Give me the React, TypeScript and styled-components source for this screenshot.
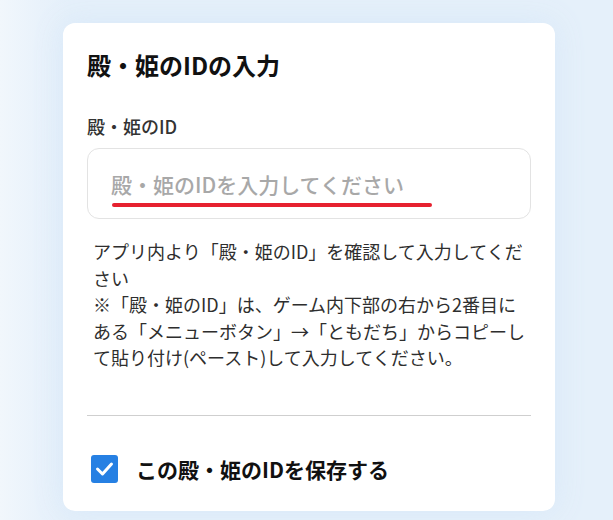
import React from "react";
import styled, { createGlobalStyle } from "styled-components";

const Global = createGlobalStyle`
  html, body { margin: 0; padding: 0; }
  body {
    background: #e6f0fa;
    font-family: "Noto Sans CJK JP", "Noto Sans", sans-serif;
    color: #222;
  }
`;

const Page = styled.div`
  min-height: 520px;
  padding: 23px 0 0 63px;
  box-sizing: border-box;
  background: linear-gradient(90deg, #f1f7fc 0px, #e9f2fb 40px, #e5f0fa 70px);
`;

const Card = styled.div`
  width: 492px;
  height: 488px;
  box-sizing: border-box;
  background: #fff;
  border-radius: 12px;
  padding: 26px 24px 0 24px;
  box-shadow: 0 0 30px rgba(214, 231, 248, 0.9);
`;

const Title = styled.h1`
  margin: 0;
  font-size: 24px;
  font-weight: 700;
  line-height: 32px;
  color: #111;
`;

const Label = styled.label`
  display: block;
  margin-top: 32px;
  font-size: 18px;
  font-weight: 500;
  line-height: 26px;
  color: #333;
`;

const InputBox = styled.div`
  position: relative;
  margin-top: 9px;
  height: 71px;
  box-sizing: border-box;
  border: 1px solid #e3e3e3;
  border-radius: 12px;
  display: flex;
  align-items: center;
  padding: 0 23px;
`;

const Input = styled.input`
  border: none;
  outline: none;
  width: 100%;
  font-family: inherit;
  font-size: 21px;
  font-weight: 500;
  color: #333;
  background: transparent;
  padding: 0;
  &::placeholder { color: #a8a8a8; }
`;

const Underline = styled.div`
  position: absolute;
  left: 24px;
  top: 54px;
  width: 320px;
  height: 4px;
  border-radius: 2px;
  background: #e6212f;
`;

const Help = styled.p`
  margin: 19px 0 0 6px;
  width: 438px;
  font-size: 18px;
  line-height: 26.5px;
  color: #2e2e2e;
`;

const Divider = styled.hr`
  margin: 44px 0 0 0;
  border: none;
  border-top: 1px solid #cfcfcf;
`;

const CheckRow = styled.label`
  display: flex;
  align-items: center;
  gap: 18px;
  height: 30px;
  margin-top: 38px;
  margin-left: 4px;
  cursor: pointer;
`;

const Box = styled.span`
  width: 27px;
  height: 28px;
  border-radius: 3px;
  background: #2680e3;
  display: flex;
  align-items: center;
  justify-content: center;
`;

const CheckText = styled.span`
  font-size: 21px;
  font-weight: 700;
  line-height: 30px;
  color: #111;
`;

export default function App() {
  return (
    <>
      <Global />
      <Page>
        <Card>
          <Title>殿・姫のIDの入力</Title>
          <Label>殿・姫のID</Label>
          <InputBox>
            <Input placeholder="殿・姫のIDを入力してください" />
            <Underline />
          </InputBox>
          <Help>
            アプリ内より「殿・姫のID」を確認して入力してください
            <br />
            ※「殿・姫のID」は、ゲーム内下部の右から2番目にある「メニューボタン」→「ともだち」からコピーして貼り付け(ペースト)して入力してください。
          </Help>
          <Divider />
          <CheckRow>
            <Box>
              <svg width="19" height="16" viewBox="0 0 19 16">
                <path d="M2.5 8 L7.5 13 L16.5 3" fill="none" stroke="#fff" strokeWidth="3" strokeLinecap="round" strokeLinejoin="round" />
              </svg>
            </Box>
            <CheckText>この殿・姫のIDを保存する</CheckText>
          </CheckRow>
        </Card>
      </Page>
    </>
  );
}
